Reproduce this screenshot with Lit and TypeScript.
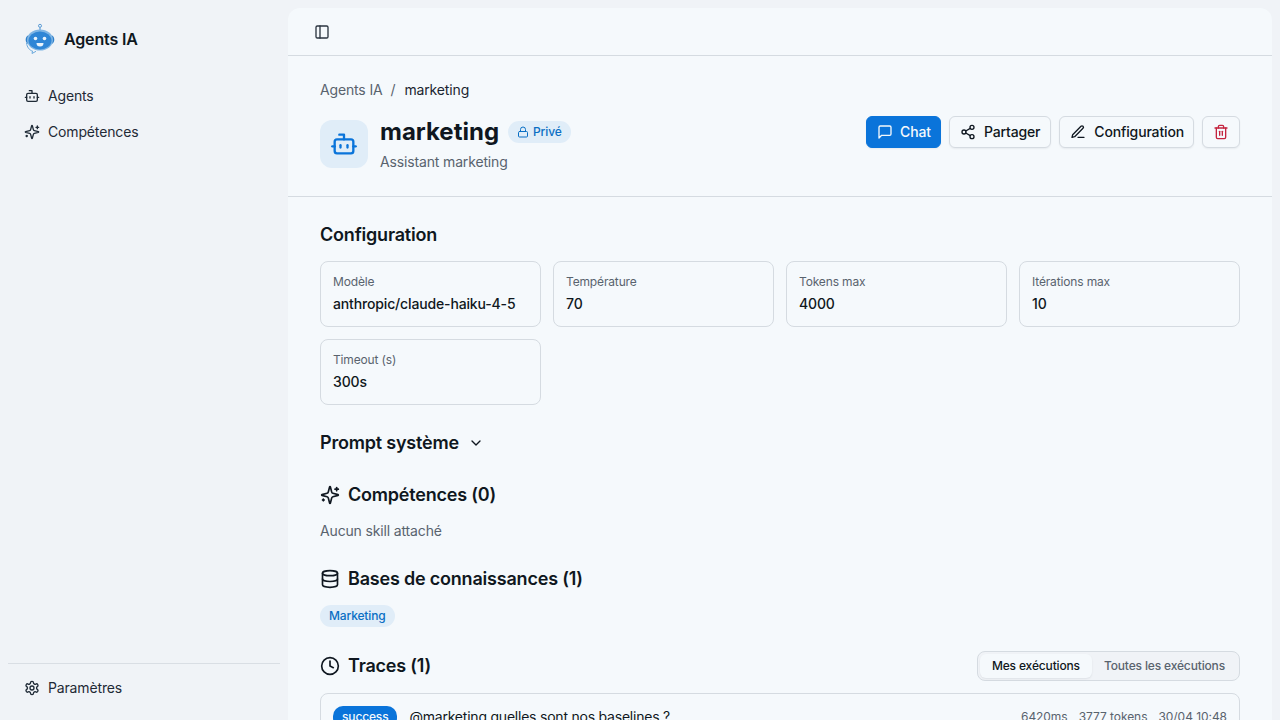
import { LitElement, html, css, svg } from "lit";
import { customElement } from "lit/decorators.js";

const ic = (body: unknown, size = 16, sw = 2) => html`<svg class="ic" width=${size} height=${size} viewBox="0 0 24 24" fill="none" stroke="currentColor" stroke-width=${sw} stroke-linecap="round" stroke-linejoin="round">${body}</svg>`;

const bot = svg`<path d="M12 8V4H8"/><rect x="4" y="8" width="16" height="12" rx="2"/><path d="M2 14h2"/><path d="M20 14h2"/><path d="M15 13v2"/><path d="M9 13v2"/>`;
const sparkles = svg`<path d="M9.937 15.5A2 2 0 0 0 8.5 14.063l-6.135-1.582a.5.5 0 0 1 0-.962L8.5 9.936A2 2 0 0 0 9.937 8.5l1.582-6.135a.5.5 0 0 1 .963 0L14.063 8.5A2 2 0 0 0 15.5 9.937l6.135 1.581a.5.5 0 0 1 0 .964L15.5 14.063a2 2 0 0 0-1.437 1.437l-1.582 6.135a.5.5 0 0 1-.963 0z"/><path d="M20 3v4"/><path d="M22 5h-4"/><path d="M4 17v2"/><path d="M5 18H3"/>`;
const settings = svg`<path d="M12.22 2h-.44a2 2 0 0 0-2 2v.18a2 2 0 0 1-1 1.73l-.43.25a2 2 0 0 1-2 0l-.15-.08a2 2 0 0 0-2.73.73l-.22.38a2 2 0 0 0 .73 2.73l.15.1a2 2 0 0 1 1 1.72v.51a2 2 0 0 1-1 1.74l-.15.09a2 2 0 0 0-.73 2.73l.22.38a2 2 0 0 0 2.73.73l.15-.08a2 2 0 0 1 2 0l.43.25a2 2 0 0 1 1 1.73V20a2 2 0 0 0 2 2h.44a2 2 0 0 0 2-2v-.18a2 2 0 0 1 1-1.73l.43-.25a2 2 0 0 1 2 0l.15.08a2 2 0 0 0 2.73-.73l.22-.39a2 2 0 0 0-.73-2.73l-.15-.08a2 2 0 0 1-1-1.74v-.5a2 2 0 0 1 1-1.74l.15-.09a2 2 0 0 0 .73-2.73l-.22-.38a2 2 0 0 0-2.73-.73l-.15.08a2 2 0 0 1-2 0l-.43-.25a2 2 0 0 1-1-1.73V4a2 2 0 0 0-2-2z"/><circle cx="12" cy="12" r="3"/>`;
const panel = svg`<rect x="3" y="3" width="18" height="18" rx="2"/><path d="M9 3v18"/>`;
const lock = svg`<rect x="3" y="11" width="18" height="11" rx="2"/><path d="M7 11V7a5 5 0 0 1 10 0v4"/>`;
const msg = svg`<path d="M21 15a2 2 0 0 1-2 2H7l-4 4V5a2 2 0 0 1 2-2h14a2 2 0 0 1 2 2z"/>`;
const share = svg`<circle cx="18" cy="5" r="3"/><circle cx="6" cy="12" r="3"/><circle cx="18" cy="19" r="3"/><line x1="8.59" y1="13.51" x2="15.42" y2="17.49"/><line x1="15.41" y1="6.51" x2="8.59" y2="10.49"/>`;
const pen = svg`<path d="M12 20h9"/><path d="M16.5 3.5a2.12 2.12 0 0 1 3 3L7 19l-4 1 1-4Z"/>`;
const trash = svg`<path d="M3 6h18"/><path d="M19 6v14c0 1-1 2-2 2H7c-1 0-2-1-2-2V6"/><path d="M8 6V4c0-1 1-2 2-2h4c1 0 2 1 2 2v2"/><line x1="10" y1="11" x2="10" y2="17"/><line x1="14" y1="11" x2="14" y2="17"/>`;
const chevron = svg`<path d="m6 9 6 6 6-6"/>`;
const db = svg`<ellipse cx="12" cy="5" rx="9" ry="3"/><path d="M3 5V19A9 3 0 0 0 21 19V5"/><path d="M3 12A9 3 0 0 0 21 12"/>`;
const clock = svg`<circle cx="12" cy="12" r="10"/><polyline points="12 6 12 12 16 14"/>`;

const logo = html`<svg width="32" height="32" viewBox="0 0 32 32" fill="none">
  <circle cx="16" cy="2.800" r="1.500" stroke="#5b9bd5" stroke-width="1"/>
  <path d="M16 4.300V7" stroke="#5b9bd5" stroke-width="1.200"/>
  <path d="M4.500 21C1 20 .5 14 4.500 12zM27.500 12c4 2 3.500 8 0 9z" fill="#2f7fc9"/>
  <path d="M2.500 20c.5 4 3 7.500 6 8l-.500 2.500 4-2.200" stroke="#6aa9dd" stroke-width="1" fill="none"/>
  <ellipse cx="16" cy="17" rx="13" ry="10.500" fill="#7fb5e4"/>
  <ellipse cx="16" cy="17.500" rx="11.500" ry="9" fill="#2f86d6"/>
  <circle cx="11.500" cy="15.500" r="1.800" fill="#eaf4fc"/>
  <circle cx="20.500" cy="15.500" r="1.800" fill="#eaf4fc"/>
  <path d="M12.500 20h7a3.500 3.500 0 0 1-7 0z" fill="#eaf4fc"/>
</svg>`;

@customElement("app-root")
export class AppRoot extends LitElement {
  static styles = css`
    :host { display: flex; width: 1280px; height: 720px; overflow: hidden; background: #f0f3f7; color: #0f1720; font-family: Inter, "Liberation Sans", sans-serif; font-size: 14px; line-height: 20px; letter-spacing: -0.15px; }
    * { box-sizing: border-box; }
    .ic { display: block; flex: none; }
    .side { width: 288px; flex: none; display: flex; flex-direction: column; padding: 0 8px; }
    .brand { display: flex; align-items: center; gap: 8px; height: 80px; padding: 0 16px 2px 16px; font-size: 16px; font-weight: 600; }
    .nav { display: flex; flex-direction: column; gap: 4px; flex: 1; }
    .item { display: flex; align-items: center; gap: 8px; height: 32px; padding: 0 16px; color: #1f2a36; }
    .foot { border-top: 1px solid #d9dee4; padding: 8px 0 16px; }
    .main { flex: 1; margin: 8px 8px 0 0; background: #f5f9fc; border-radius: 12px 12px 0 0; overflow: hidden; }
    .top { height: 48px; border-bottom: 1px solid #d5dbe1; display: flex; align-items: center; padding: 0 26px; color: #2b3540; }
    .head { padding: 24px 32px; border-bottom: 1px solid #d5dbe1; }
    .crumb { display: flex; gap: 8px; color: #59636e; margin-bottom: 16px; }
    .crumb b { font-weight: 400; color: #1b2530; margin-left: 1px; }
    .hrow { display: flex; align-items: flex-start; justify-content: space-between; }
    .hleft { display: flex; align-items: center; gap: 12px; }
    .avatar { width: 48px; height: 48px; border-radius: 12px; background: #e0edf8; color: #0a74da; display: flex; align-items: center; justify-content: center; }
    .tline { display: flex; align-items: center; gap: 9px; height: 32px; }
    h1 { margin: 0; font-size: 24px; line-height: 32px; font-weight: 700; letter-spacing: 0; }
    .pill { display: inline-flex; align-items: center; gap: 4px; height: 22px; padding: 0 9px; border-radius: 11px; background: #e0edf8; color: #0a6fc4; font-size: 12px; font-weight: 500; line-height: 16px; }
    .sub { margin-top: 4px; color: #59636e; }
    .actions { display: flex; gap: 8px; }
    .btn { display: flex; align-items: center; gap: 8px; height: 32px; padding: 0 10px; border: 1px solid #d5dbe1; border-radius: 6px; background: #f5f9fc; box-shadow: 0 1px 2px rgba(15,23,32,.06); font-weight: 500; color: #0f1720; }
    .btn.chat { background: #0a74da; border-color: #0a74da; color: #f5f9fc; gap: 7px; padding-right: 9px; }
    .btn.del { color: #c4243f; }
    .btn.cfg { padding-right: 9px; }
    .body { padding: 24px 32px; display: flex; flex-direction: column; }
    h2 { margin: 0; font-size: 18px; line-height: 28px; font-weight: 600; letter-spacing: -0.2px; display: flex; align-items: center; gap: 8px; }
    .prompt { gap: 9px; }
    .grid { display: grid; grid-template-columns: repeat(4, 1fr); gap: 12px; margin: 12px 0 24px; }
    .card { border: 1px solid #d5dbe1; border-radius: 8px; padding: 12px; height: 66px; }
    .lab { font-size: 12px; line-height: 16px; color: #59636e; }
    .val { margin-top: 4px; font-weight: 500; line-height: 20px; }
    .sec { margin-bottom: 24px; }
    .muted { margin-top: 12px; color: #59636e; }
    .tag { display: inline-flex; align-items: center; height: 22px; margin-top: 12px; padding: 0 9px; border-radius: 11px; background: #e0edf8; color: #0a6fc4; font-size: 12px; font-weight: 500; }
    .thead { display: flex; align-items: center; justify-content: space-between; height: 30px; }
    .seg { display: flex; align-items: center; height: 30px; padding: 2px; border: 1px solid #d5dbe1; border-radius: 8px; background: #f0f3f7; font-size: 12px; line-height: 16px; font-weight: 500; color: #59636e; }
    .seg span { padding: 4px 12px; height: 24px; }
    .seg .on { background: #f5f9fc; color: #0f1720; border-radius: 6px; box-shadow: 0 1px 2px rgba(15,23,32,.08); }
    .trace { display: flex; align-items: center; gap: 12px; margin-top: 12px; padding: 12px; border: 1px solid #d5dbe1; border-radius: 8px; }
    .badge { background: #0a74da; color: #f5f9fc; padding: 2px 9px; border-radius: 10px; font-size: 12px; line-height: 16px; font-weight: 500; height: 22px; display: flex; align-items: center; }
    .q { flex: 1; letter-spacing: -0.22px; }
    .meta { display: flex; gap: 11px; font-size: 12px; color: #59636e; letter-spacing: -0.05px; }
  `;

  render() {
    const configs = [
      ["Modèle", "anthropic/claude-haiku-4-5"],
      ["Température", "70"],
      ["Tokens max", "4000"],
      ["Itérations max", "10"],
      ["Timeout (s)", "300s"],
    ];
    return html`
      <aside class="side">
        <div class="brand">${logo}<span>Agents IA</span></div>
        <nav class="nav">
          <div class="item">${ic(bot)}Agents</div>
          <div class="item">${ic(sparkles)}Compétences</div>
        </nav>
        <div class="foot"><div class="item">${ic(settings)}Paramètres</div></div>
      </aside>
      <main class="main">
        <div class="top">${ic(panel)}</div>
        <header class="head">
          <div class="crumb"><span>Agents IA</span><span>/</span><b>marketing</b></div>
          <div class="hrow">
            <div class="hleft">
              <div class="avatar">${ic(bot, 28)}</div>
              <div>
                <div class="tline"><h1>marketing</h1><span class="pill">${ic(lock, 12)}Privé</span></div>
                <div class="sub">Assistant marketing</div>
              </div>
            </div>
            <div class="actions">
              <div class="btn chat">${ic(msg)}Chat</div>
              <div class="btn">${ic(share)}Partager</div>
              <div class="btn cfg">${ic(pen)}Configuration</div>
              <div class="btn del">${ic(trash)}</div>
            </div>
          </div>
        </header>
        <div class="body">
          <h2>Configuration</h2>
          <div class="grid">
            ${configs.map(([l, v]) => html`<div class="card"><div class="lab">${l}</div><div class="val">${v}</div></div>`)}
          </div>
          <div class="sec"><h2 class="prompt">Prompt système ${ic(chevron)}</h2></div>
          <div class="sec"><h2>${ic(sparkles, 20)}Compétences (0)</h2><div class="muted">Aucun skill attaché</div></div>
          <div class="sec"><h2>${ic(db, 20)}Bases de connaissances (1)</h2><span class="tag">Marketing</span></div>
          <div class="thead">
            <h2>${ic(clock, 20)}Traces (1)</h2>
            <div class="seg"><span class="on">Mes exécutions</span><span>Toutes les exécutions</span></div>
          </div>
          <div class="trace">
            <span class="badge">success</span>
            <span class="q">@marketing quelles sont nos baselines ?</span>
            <span class="meta"><span>6420ms</span><span>3777 tokens</span><span>30/04 10:48</span></span>
          </div>
        </div>
      </main>
    `;
  }
}
